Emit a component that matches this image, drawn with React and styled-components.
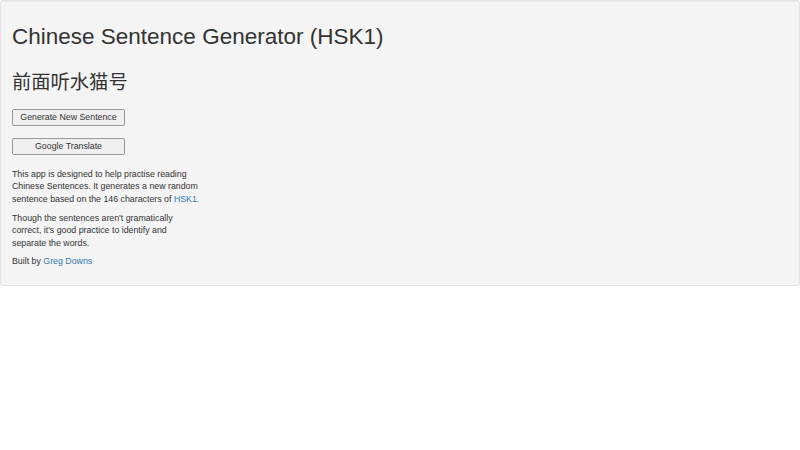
import React from "react";
import styled, { createGlobalStyle } from "styled-components";

const Global = createGlobalStyle`
  html, body { margin: 0; padding: 0; background: #fff; }
  body {
    font-family: "Liberation Sans", Arial, "Noto Sans CJK SC", sans-serif;
    color: #333;
  }
`;

const Well = styled.div`
  background: #f4f4f4;
  border: 1px solid #e3e3e3;
  border-radius: 3px;
  box-shadow: inset 0 1px 1px rgba(0, 0, 0, 0.05);
  padding: 11px 11px 11px;
`;

const Title = styled.h1`
  font-size: 22.5px;
  font-weight: 400;
  line-height: 1.1;
  margin: 13px 0 6px;
`;

const Sentence = styled.h2`
  font-family: "Noto Sans CJK SC", "Liberation Sans", sans-serif;
  font-size: 19.3px;
  font-weight: 400;
  line-height: 1.1;
  margin: 21px 0 17px;
`;

const Button = styled.button`
  display: block;
  width: 113px;
  height: 17px;
  padding: 0;
  margin: 0 0 12px;
  font-family: "Liberation Sans", Arial, sans-serif;
  font-size: 8.8px;
  color: #333;
  background: #efefef;
  border: 1px solid #9a9a9a;
  border-radius: 2px;
`;

const Column = styled.div`
  width: 189px;
  margin-top: 13px;
`;

const Para = styled.p`
  font-size: 8.8px;
  line-height: 12.5px;
  margin: 0 0 6.25px;
`;

const Link = styled.a`
  color: #337ab7;
  text-decoration: none;
`;

export default function App() {
  return (
    <>
      <Global />
      <Well>
        <Title>Chinese Sentence Generator (HSK1)</Title>
        <Sentence>前面听水猫号</Sentence>
        <Button>Generate New Sentence</Button>
        <Button>Google Translate</Button>
        <Column>
          <Para>
            This app is designed to help practise reading Chinese Sentences. It
            generates a new random sentence based on the 146 characters of{" "}
            <Link href="#">HSK1.</Link>
          </Para>
          <Para>
            Though the sentences aren't gramatically correct, it's good practice
            to identify and separate the words.
          </Para>
          <Para>
            Built by <Link href="#">Greg Downs</Link>
          </Para>
        </Column>
      </Well>
    </>
  );
}
